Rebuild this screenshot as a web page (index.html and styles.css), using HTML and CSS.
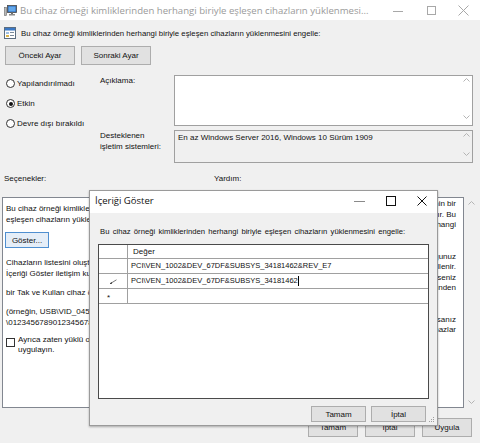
FILE: index.html
```html
<!DOCTYPE html>
<html lang="tr">
<head>
<meta charset="utf-8">
<title>İlke ayarı</title>
<link rel="stylesheet" href="styles.css">
</head>
<body>
<div class="app">
  <div class="titlebar">
    <svg class="ticon" width="13" height="12" viewBox="0 0 13 12">
      <rect x="0.5" y="3.5" width="2" height="8" fill="#b8b8b8" stroke="#6a6a6a" stroke-width="0.6"/>
      <rect x="3.5" y="1.5" width="9" height="7" fill="#2a64b0" stroke="#4a4a4a" stroke-width="0.8"/>
      <rect x="4.5" y="2.5" width="7" height="5" fill="#63a8ec"/>
      <rect x="7" y="8.5" width="2" height="1.5" fill="#707070"/>
      <rect x="5" y="10" width="6" height="1.5" fill="#8c8c8c"/>
    </svg>
    <div class="ttext">Bu cihaz örneği kimliklerinden herhangi biriyle eşleşen cihazların yüklenmesi...</div>
    <div class="wctrls">
      <span class="wc"><svg width="10" height="10" viewBox="0 0 10 10"><line x1="0" y1="6.5" x2="10" y2="6.5" stroke="#a8a8a8"/></svg></span>
      <span class="wc"><svg width="10" height="10" viewBox="0 0 10 10"><rect x="1.5" y="1.5" width="8" height="8" fill="none" stroke="#a8a8a8"/></svg></span>
      <span class="wc"><svg width="11" height="11" viewBox="0 0 11 11"><path d="M0.5 0.5 L10.5 10.5 M10.5 0.5 L0.5 10.5" stroke="#a8a8a8" fill="none"/></svg></span>
    </div>
  </div>

  <div class="head">
    <svg class="hicon" width="12" height="12" viewBox="0 0 12 12">
      <rect x="0.5" y="0.5" width="11" height="11" fill="#ffffff" stroke="#5b6d80"/>
      <rect x="1" y="1" width="10" height="2.5" fill="#3b78c4"/>
      <rect x="2" y="5" width="3" height="2" fill="#9fc0e4"/>
      <rect x="6" y="5" width="4" height="1" fill="#7a8a9a"/>
      <rect x="2" y="8" width="3" height="2" fill="#d9b44a"/>
      <rect x="6" y="8" width="4" height="1" fill="#7a8a9a"/>
    </svg>
    <span>Bu cihaz örneği kimliklerinden herhangi biriyle eşleşen cihazların yüklenmesini engelle:</span>
  </div>

  <div class="nav">
    <button class="btn navbtn">Önceki Ayar</button>
    <button class="btn navbtn">Sonraki Ayar</button>
  </div>

  <div class="config">
    <div class="radios">
      <div class="radio"><span class="rb"></span>Yapılandırılmadı</div>
      <div class="radio"><span class="rb on"></span>Etkin</div>
      <div class="radio"><span class="rb"></span>Devre dışı bırakıldı</div>
    </div>
    <div class="flabel">Açıklama:</div>
    <div class="box white">
      <div class="boxtext"></div>
      <div class="sb sb-comment">
        <svg width="7" height="4" viewBox="0 0 7 4"><polyline points="0.5,3.5 3.5,0.5 6.5,3.5" fill="none" stroke="#b4b4b4"/></svg>
        <svg width="7" height="4" viewBox="0 0 7 4"><polyline points="0.5,0.5 3.5,3.5 6.5,0.5" fill="none" stroke="#b4b4b4"/></svg>
      </div>
    </div>
    <div class="flabel">Desteklenen<br>işletim sistemleri:</div>
    <div class="box grey">
      <div class="boxtext">En az Windows Server 2016, Windows 10 Sürüm 1909</div>
      <div class="sb sb-ro">
        <svg width="7" height="4" viewBox="0 0 7 4"><polyline points="0.5,3.5 3.5,0.5 6.5,3.5" fill="none" stroke="#b4b4b4"/></svg>
        <svg width="7" height="4" viewBox="0 0 7 4"><polyline points="0.5,0.5 3.5,3.5 6.5,0.5" fill="none" stroke="#b4b4b4"/></svg>
      </div>
    </div>
  </div>

  <div class="seclabels">
    <div class="sl-opts">Seçenekler:</div>
    <div>Yardım:</div>
  </div>

  <div class="panels">
    <div class="opts">
      <div>Bu cihaz örneği kimliklerinden herhangi biriyle</div>
      <div>eşleşen cihazların yüklenmesini engelle:</div>
      <button class="btn showbtn">Göster...</button>
      <div class="op-p2">Cihazların listesini oluşturmak için Göster'e tıklayın.</div>
      <div>İçeriği Göster iletişim kutusunda Değer sütununa</div>
      <div class="op-p">bir Tak ve Kullan cihaz örneği kimliği yazın</div>
      <div class="op-p">(örneğin, USB\VID_0451&amp;PID_6001&amp;REV_0100</div>
      <div>\0123456789012345678901).</div>
      <div class="check">
        <span class="cb"></span>
        <div class="cblabel">Ayrıca zaten yüklü olan eşleşen cihazlara<br>uygulayın.</div>
      </div>
    </div>
    <div class="help">
      <div class="helpbox">
        <div class="hl">Bu ilke ayarı, Tak ve Kullan cihaz örneği kimliklerinin bir</div>
        <div class="hl">listesini belirtmenize olanak tanır. Bu</div>
        <div class="hl">ilke ayarı, yüklemeye izin veren diğer herhangi</div>
        <div class="hs">bir ilke ayarından önceliklidir.</div>
        <div class="hb"></div>
        <div class="hl">Bu ilke ayarını etkinleştirirseniz, oluşturduğunuz</div>
        <div class="hl">listede yer alan cihazların yüklenmesi engellenir.</div>
        <div class="hl">Bu ilke ayarını uzak masaüstünde etkinleştirirseniz</div>
        <div class="hl">ilke ayarı, cihazların uzak masaüstü istemcisinden</div>
        <div class="hs">yeniden yönlendirilmesini etkiler.</div>
        <div class="hb"></div>
        <div class="hl">Bu ilke ayarını devre dışı bırakır veya yapılandırmazsanız</div>
        <div class="hl">diğer ilke ayarlarının izin verdiği ölçüde cihazlar</div>
        <div class="hs">yüklenebilir ve güncelleştirilebilir.</div>
      </div>
      <div class="helpsb">
        <svg width="7" height="4" viewBox="0 0 7 4"><polyline points="0.5,3.5 3.5,0.5 6.5,3.5" fill="none" stroke="#b4b4b4"/></svg>
        <svg width="7" height="4" viewBox="0 0 7 4"><polyline points="0.5,0.5 3.5,3.5 6.5,0.5" fill="none" stroke="#b4b4b4"/></svg>
      </div>
    </div>
  </div>

  <div class="footer">
    <button class="btn fbtn">Tamam</button>
    <button class="btn fbtn">İptal</button>
    <button class="btn fbtn">Uygula</button>
  </div>

  <div class="dlg">
    <div class="dtitle">
      <span class="dtext">İçeriği Göster</span>
      <div class="dctrls">
        <span class="dc"><svg width="11" height="10" viewBox="0 0 11 10"><line x1="0" y1="5.5" x2="11" y2="5.5" stroke="#8a8a8a"/></svg></span>
        <span class="dc"><svg width="10" height="10" viewBox="0 0 10 10"><rect x="0.5" y="0.5" width="9" height="9" fill="none" stroke="#111"/></svg></span>
        <span class="dc"><svg width="10" height="10" viewBox="0 0 10 10"><path d="M0.5 0.5 L9.5 9.5 M9.5 0.5 L0.5 9.5" stroke="#111" fill="none"/></svg></span>
      </div>
    </div>
    <div class="dlabel">Bu cihaz örneği kimliklerinden herhangi biriyle eşleşen cihazların yüklenmesini engelle:</div>
    <div class="dgrid">
      <div class="grow ghead"><div class="rh"></div><div class="cell hcell">Değer</div></div>
      <div class="grow"><div class="rh"></div><div class="cell">PCI\VEN_1002&amp;DEV_67DF&amp;SUBSYS_34181462&amp;REV_E7</div></div>
      <div class="grow"><div class="rh"><svg width="7" height="5" viewBox="0 0 7 5"><line x1="1" y1="4.2" x2="6.5" y2="0.8" stroke="#666" stroke-width="0.9"/><line x1="0.3" y1="4.7" x2="1.8" y2="3.8" stroke="#111" stroke-width="1.2"/></svg></div><div class="cell">PCI\VEN_1002&amp;DEV_67DF&amp;SUBSYS_34181462<span class="caret"></span></div></div>
      <div class="grow"><div class="rh star">*</div><div class="cell"></div></div>
    </div>
    <div class="dfoot">
      <button class="btn dbtn">Tamam</button>
      <button class="btn dbtn">İptal</button>
    </div>
    <svg class="grip" width="6" height="6" viewBox="0 0 6 6">
      <rect x="4" y="0" width="1" height="1" fill="#a0a0a0"/>
      <rect x="2" y="2" width="1" height="1" fill="#a0a0a0"/>
      <rect x="4" y="2" width="1" height="1" fill="#a0a0a0"/>
      <rect x="0" y="4" width="1" height="1" fill="#a0a0a0"/>
      <rect x="2" y="4" width="1" height="1" fill="#a0a0a0"/>
      <rect x="4" y="4" width="1" height="1" fill="#a0a0a0"/>
    </svg>
  </div>
</div>
</body>
</html>
```

FILE: styles.css
```css
* { box-sizing: border-box; }
html, body { margin: 0; padding: 0; }
body {
  width: 480px;
  height: 443px;
  overflow: hidden;
  background: #f0f0f0;
  font-family: "Liberation Sans", Arial, sans-serif;
  font-size: 8px;
  color: #111;
}
.app { position: relative; width: 480px; height: 443px; }

.titlebar { height: 20px; background: #fff; display: flex; align-items: center; }
.ticon { margin-left: 4px; flex: none; }
.ttext {
  margin-left: 3px;
  flex: 1;
  min-width: 0;
  font-family: "Open Sans", "Noto Sans", sans-serif;
  font-size: 9.6px;
  color: #9a9a9a;
  white-space: nowrap;
}
.wctrls { display: flex; flex: none; }
.wc { width: 33px; height: 20px; display: flex; align-items: center; justify-content: center; }

.head { display: flex; align-items: center; gap: 5px; padding: 7px 0 0 4px; height: 19px; white-space: nowrap; font-size: 7.8px; }
.hicon { flex: none; }

.btn {
  font-family: inherit;
  font-size: 8px;
  color: #111;
  background: #e1e1e1;
  border: 1px solid #adadad;
  padding: 0;
  margin: 0;
}
.nav { display: flex; gap: 6px; padding-left: 5px; margin-top: 7px; }
.navbtn { width: 70px; height: 19px; }

.config {
  display: grid;
  grid-template-columns: 94px 74px 299px;
  grid-template-rows: 51px 33px;
  row-gap: 4px;
  margin-top: 10px;
  padding-left: 6px;
}
.radios { grid-row: 1 / span 2; grid-column: 1; display: flex; flex-direction: column; gap: 8px; padding-top: 2.5px; }
.radio { display: flex; align-items: center; gap: 2px; height: 12px; line-height: 12px; white-space: nowrap; }
.rb {
  position: relative;
  width: 9px; height: 9px;
  border: 1px solid #333;
  border-radius: 50%;
  background: #fff;
  flex: none;
}
.rb.on::after {
  content: "";
  position: absolute;
  left: 1.5px; top: 1.5px;
  width: 4px; height: 4px;
  border-radius: 50%;
  background: #111;
}
.flabel { line-height: 11px; }
.box { border: 1px solid #a0a0a0; display: flex; }
.box.white { background: #fff; }
.box.grey { background: #f0f0f0; }
.boxtext { flex: 1; padding: 1px 3px; line-height: 11px; }
.sb { width: 12px; display: flex; flex-direction: column; justify-content: space-between; align-items: center; }
.sb-comment { padding: 2px 0 6px; }
.sb-ro { padding: 2px 0 6px; }

.seclabels { display: flex; margin-top: 10px; height: 11px; line-height: 11px; }
.sl-opts { width: 214px; padding-left: 4px; }

.panels { display: flex; gap: 4px; margin-top: 13px; height: 211px; padding-left: 2px; }
.opts {
  width: 211px;
  background: #fff;
  border: 1px solid #828790;
  padding: 5px 3px;
  line-height: 11px;
  white-space: nowrap;
  overflow: hidden;
}
.showbtn {
  display: block;
  margin: 7px 0 0 -1px;
  width: 44px;
  height: 16px;
  border-color: #4f8fd0;
  background: #e5eef8;
}
.op-p2 { margin-top: 9px; }
.op-p { margin-top: 8px; }
.check { display: flex; gap: 3px; margin-top: 7px; align-items: flex-start; }
.cb { width: 9px; height: 9px; border: 1px solid #333; background: #fff; flex: none; margin-top: 3px; }
.cblabel { line-height: 10px; }

.help { display: flex; width: 261px; }
.helpbox {
  width: 247px;
  background: #fff;
  border: 1px solid #828790;
  padding: 1px 7px 0 3px;
  line-height: 10.5px;
  white-space: nowrap;
  overflow: hidden;
}
.hl { text-align: right; height: 10.5px; }
.hs { text-align: left; height: 10.5px; }
.hb { height: 10.5px; }
.helpsb { width: 14px; display: flex; flex-direction: column; justify-content: space-between; align-items: center; padding: 4px 0 4px; }

.footer { display: flex; justify-content: flex-end; gap: 7px; padding-right: 8px; margin-top: 10px; }
.fbtn { width: 50px; height: 19px; }

.dlg {
  position: absolute;
  left: 89px;
  top: 190px;
  width: 349px;
  height: 236px;
  background: #f0f0f0;
  border: 1px solid #9a9a9a;
  box-shadow: 0 1px 2px rgba(0, 0, 0, 0.3);
  display: flex;
  flex-direction: column;
}
.dtitle { height: 22px; background: #fff; display: flex; align-items: center; flex: none; padding-bottom: 3px; }
.dtext { flex: 1; padding-left: 5px; font-family: "Open Sans", "Noto Sans", sans-serif; font-size: 9.5px; }
.dctrls { display: flex; }
.dc { width: 31px; height: 19px; display: flex; align-items: center; justify-content: center; }
.dlabel { margin: 12.5px 0 0 10px; line-height: 11px; font-size: 7.7px; white-space: nowrap; word-spacing: 1.1px; }
.dgrid {
  margin: 7.5px 0 0 8px;
  width: 331px;
  height: 155px;
  border: 1px solid #4a4a4a;
  background: #fff;
  flex: none;
}
.grow { display: flex; height: 15px; border-bottom: 1px solid #a0a0a0; }
.grow.ghead { height: 14px; }
.rh {
  width: 29px;
  flex: none;
  border-right: 1px solid #a0a0a0;
  display: flex;
  align-items: center;
  justify-content: center;
}
.rh.star { justify-content: flex-start; padding-left: 8px; font-size: 8px; padding-top: 3px; }
.cell { padding-left: 3px; line-height: 14px; white-space: nowrap; display: flex; align-items: center; font-size: 7.5px; }
.hcell { padding-left: 5px; line-height: 13px; font-size: 8px; }
.caret { display: inline-block; width: 1px; height: 10px; background: #000; margin-left: 0.5px; }
.dfoot { display: flex; justify-content: flex-end; gap: 5px; padding-right: 11px; margin-top: 7px; }
.dbtn { width: 55px; height: 16px; }
.grip { position: absolute; right: 2px; bottom: 2px; }
```
